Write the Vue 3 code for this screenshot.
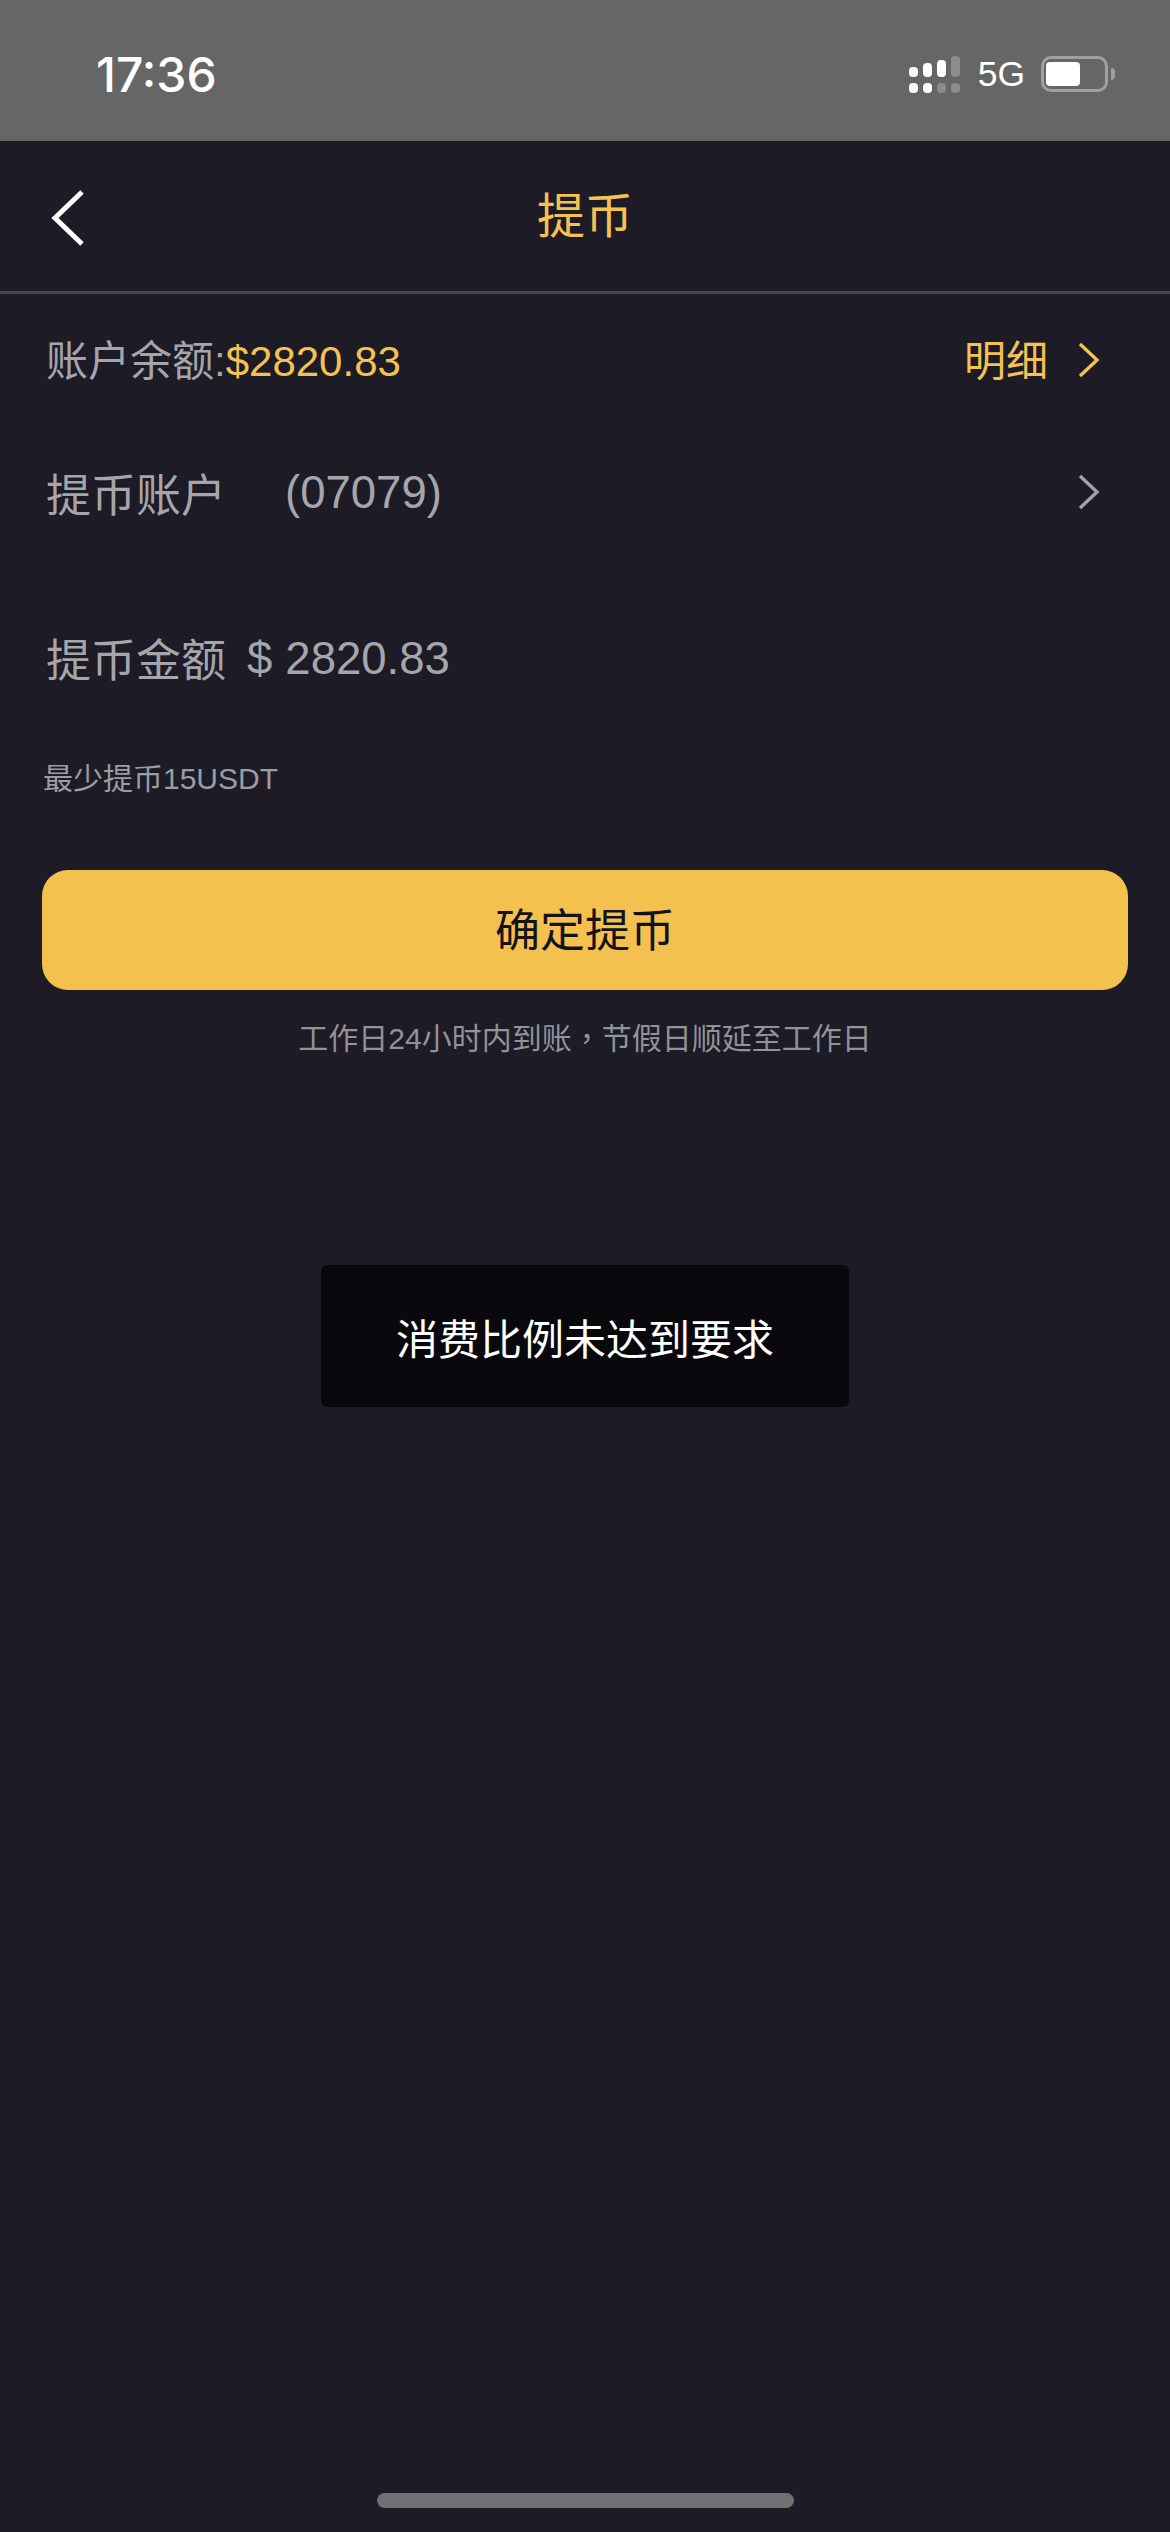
<script setup>
const signal = [
  { h: 10, dimBottom: false, dimTop: false },
  { h: 14, dimBottom: false, dimTop: false },
  { h: 17, dimBottom: true, dimTop: false },
  { h: 21, dimBottom: true, dimTop: true },
]
</script>

<template>
  <div class="page">
    <header class="status">
      <span class="time">17:36</span>
      <div class="status-right">
        <div class="signal">
          <div v-for="(bar, i) in signal" :key="i" class="sig-col">
            <i class="sig-top" :class="{ dim: bar.dimTop }" :style="{ height: bar.h + 'px' }"></i>
            <i class="sig-bottom" :class="{ dim: bar.dimBottom }"></i>
          </div>
        </div>
        <span class="net">5G</span>
        <div class="battery">
          <div class="battery-body"><div class="battery-fill"></div></div>
          <i class="battery-cap"></i>
        </div>
      </div>
    </header>

    <nav class="nav">
      <svg class="back" width="36" height="60" viewBox="0 0 36 60" fill="none">
        <path d="M32 4 L5 30 L32 56" stroke="#fff" stroke-width="5" />
      </svg>
      <h1 class="title">提币</h1>
    </nav>

    <main class="content">
      <section class="balance">
        <div class="balance-left">账户余额:<span class="gold">$2820.83</span></div>
        <div class="detail gold">
          <span class="detail-text">明细</span>
          <svg width="22" height="36" viewBox="0 0 22 36" fill="none">
            <path d="M2 2 L19 18 L2 34" stroke="#f5c252" stroke-width="3.4" />
          </svg>
        </div>
      </section>

      <section class="account">
        <span class="label">提币账户</span>
        <span class="account-no">(07079)</span>
        <svg class="account-arrow" width="22" height="36" viewBox="0 0 22 36" fill="none">
          <path d="M2 2 L19 18 L2 34" stroke="#a3a3ab" stroke-width="3.4" />
        </svg>
      </section>

      <section class="amount">
        <span class="label">提币金额</span>
        <span class="currency">$</span>
        <span class="amount-value">2820.83</span>
      </section>

      <p class="min">最少提币15USDT</p>

      <button class="submit">确定提币</button>

      <p class="hint">工作日24小时内到账<span class="comma">，</span>节假日顺延至工作日</p>
    </main>

    <div class="toast">消费比例未达到要求</div>

    <footer class="home-wrap"><i class="home"></i></footer>
  </div>
</template>

<style>
html, body { margin: 0; background: #1c1b26; }
</style>

<style scoped>
.page {
  position: relative;
  width: 1170px;
  height: 2532px;
  display: flex;
  flex-direction: column;
  overflow: hidden;
  background: #1c1b26;
  font-family: "Liberation Sans", "Noto Sans CJK SC", sans-serif;
  color: #a5a5ab;
}
.status {
  height: 141px;
  flex: none;
  display: flex;
  align-items: center;
  justify-content: space-between;
  padding: 0 55px 0 96px;
  background: #666666;
  color: #fff;
}
.time {
  margin-top: 7px;
  font-family: Inter, "Liberation Sans", sans-serif;
  font-size: 48px;
  font-weight: 500;
}
.status-right {
  display: flex;
  align-items: center;
  margin-top: 7px;
}
.signal {
  display: flex;
  gap: 5px;
}
.sig-col {
  width: 9px;
  height: 37px;
  display: flex;
  flex-direction: column;
  justify-content: flex-end;
  gap: 6px;
}
.sig-top, .sig-bottom {
  display: block;
  width: 9px;
  background: #fff;
  border-radius: 4px;
}
.sig-bottom { height: 10px; }
.sig-top.dim, .sig-bottom.dim { background: #8c8c8c; }
.net {
  margin-left: 18px;
  font-size: 35.5px;
  color: #fff;
  line-height: 40px;
}
.battery {
  display: flex;
  align-items: center;
  margin-left: 16px;
}
.battery-body {
  box-sizing: border-box;
  width: 67px;
  height: 36px;
  padding: 3px 2px;
  border: 3px solid #a0a0a0;
  border-radius: 10px;
}
.battery-fill {
  width: 34px;
  height: 100%;
  background: #fff;
  border-radius: 4px;
}
.battery-cap {
  display: block;
  width: 4px;
  height: 12px;
  margin-left: 3px;
  background: #a0a0a0;
  border-radius: 0 6px 6px 0;
}
.nav {
  position: relative;
  height: 150px;
  flex: none;
  display: flex;
  align-items: center;
  justify-content: center;
  border-bottom: 3px solid #464552;
}
.back {
  position: absolute;
  left: 50px;
  top: 47px;
}
.title {
  margin: 0 0 9px;
  font-size: 48px;
  font-weight: 400;
  color: #f5c252;
}
.content {
  display: flex;
  flex-direction: column;
}
.gold { color: #f5c252; }
.balance {
  height: 132px;
  display: flex;
  align-items: center;
  justify-content: space-between;
  padding: 0 70px 0 46px;
  font-size: 42px;
}
.balance-left { margin-bottom: 5px; }
.detail {
  display: flex;
  align-items: center;
  gap: 30px;
}
.detail-text { margin-bottom: 5px; }
.account {
  height: 132px;
  display: flex;
  align-items: center;
  padding: 0 70px 0 46px;
}
.label {
  font-size: 45px;
}
.account-no {
  margin: 2px 0 0 59px;
  font-size: 45.5px;
}
.account-arrow { margin-left: auto; }
.amount {
  height: 170px;
  margin-top: 14px;
  display: flex;
  align-items: center;
  padding-left: 46px;
  font-size: 45.5px;
}
.currency { margin: 3px 0 0 21px; }
.amount-value { margin: 3px 0 0 13px; }
.min {
  margin: 15px 0 0 43px;
  height: 44px;
  line-height: 44px;
  font-size: 30px;
  color: #9c9ca2;
}
.submit {
  margin: 69px 42px 0;
  height: 120px;
  border: 0;
  padding: 0 0 5px;
  border-radius: 26px;
  background: #f4c14f;
  color: #14131b;
  font: inherit;
  font-size: 45px;
}
.hint {
  margin: 24px 0 0;
  height: 44px;
  line-height: 44px;
  text-align: center;
  font-size: 30px;
  color: #929298;
}
.comma {
  font-family: "Noto Sans CJK TC", sans-serif;
}
.toast {
  position: absolute;
  left: 321px;
  top: 1265px;
  width: 528px;
  height: 142px;
  display: flex;
  align-items: center;
  justify-content: center;
  background: #09090d;
  border-radius: 6px;
  color: #fff;
  font-size: 42px;
}
.home-wrap {
  margin-top: auto;
  height: 39px;
  flex: none;
  display: flex;
  justify-content: center;
}
.home {
  display: block;
  width: 417px;
  height: 15px;
  background: #707072;
  border-radius: 8px;
}
</style>
